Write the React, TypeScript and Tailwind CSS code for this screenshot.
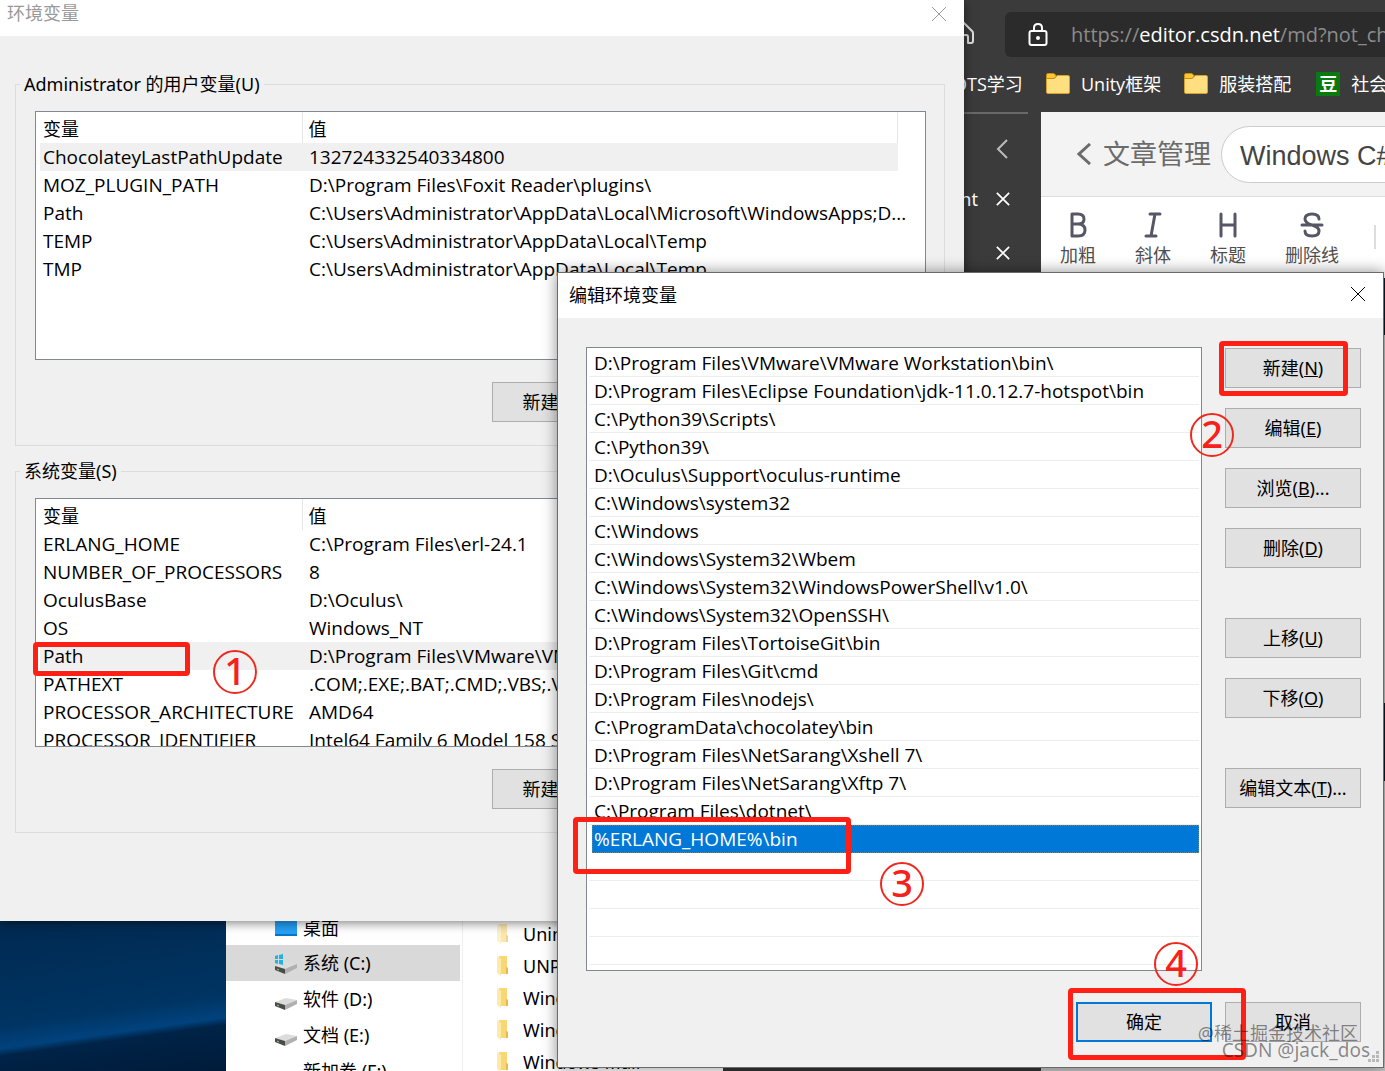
import type { ReactNode } from "react"

type Variable={
    name:string,
    value:string
}

const userVariables:Variable[]=[
  {name:"ChocolateyLastPathUpdate",value:"132724332540334800"},
  {name:"MOZ_PLUGIN_PATH",value:"D:\\Program Files\\Foxit Reader\\plugins\\"},
  {name:"Path",value:"C:\\Users\\Administrator\\AppData\\Local\\Microsoft\\WindowsApps;D..."},
  {name:"TEMP",value:"C:\\Users\\Administrator\\AppData\\Local\\Temp"},
  {name:"TMP",value:"C:\\Users\\Administrator\\AppData\\Local\\Temp"},
]

const systemVariables:Variable[]=[
  {name:"ERLANG_HOME",value:"C:\\Program Files\\erl-24.1"},
  {name:"NUMBER_OF_PROCESSORS",value:"8"},
  {name:"OculusBase",value:"D:\\Oculus\\"},
  {name:"OS",value:"Windows_NT"},
  {name:"Path",value:"D:\\Program Files\\VMware\\VM"},
  {name:"PATHEXT",value:".COM;.EXE;.BAT;.CMD;.VBS;.VBE"},
  {name:"PROCESSOR_ARCHITECTURE",value:"AMD64"},
  {name:"PROCESSOR_IDENTIFIER",value:"Intel64 Family 6 Model 158 S"},
]

const paths=[
  "D:\\Program Files\\VMware\\VMware Workstation\\bin\\",
  "D:\\Program Files\\Eclipse Foundation\\jdk-11.0.12.7-hotspot\\bin",
  "C:\\Python39\\Scripts\\",
  "C:\\Python39\\",
  "D:\\Oculus\\Support\\oculus-runtime",
  "C:\\Windows\\system32",
  "C:\\Windows",
  "C:\\Windows\\System32\\Wbem",
  "C:\\Windows\\System32\\WindowsPowerShell\\v1.0\\",
  "C:\\Windows\\System32\\OpenSSH\\",
  "D:\\Program Files\\TortoiseGit\\bin",
  "D:\\Program Files\\Git\\cmd",
  "D:\\Program Files\\nodejs\\",
  "C:\\ProgramData\\chocolatey\\bin",
  "D:\\Program Files\\NetSarang\\Xshell 7\\",
  "D:\\Program Files\\NetSarang\\Xftp 7\\",
  "C:\\Program Files\\dotnet\\",
]

function CloseIcon({className}:{className:string}) {
  return (
    <svg className={className} viewBox="0 0 16 16" fill="none" stroke="currentColor" aria-hidden="true">
      <path d="M1 1l14 14M15 1L1 15"/>
    </svg>
  )
}

function FolderIcon() {
  return (
    <svg className="h-6 w-6 shrink-0" viewBox="0 0 24 24" aria-hidden="true">
      <path d="M.5 20V6.500H8L11.500 3.500H22q1.500 0 1.500 1.500V20q0 1.500-1.500 1.500H2Q.5 21.500.5 20z" fill="#ffdf80" stroke="#d9a02c"/>
      <path d="M.5 3q0-1.500 1.500-1.500h6L10.500 4 8 6.500H.5z" fill="#f8c935" stroke="#c98f10"/>
    </svg>
  )
}

function ExplorerFolder({faded}:{faded?:boolean}) {
  return (
    <svg className={faded ? "h-5 w-4 shrink-0 opacity-60" : "h-5 w-4 shrink-0"} viewBox="0 0 16 20" aria-hidden="true">
      <path d="M4 0h8v11l1 1v6H4z" fill="#f9d775"/>
      <path d="M2 0l4 3v17l-4-3z" fill="#fde9a9"/>
      <path d="M11 11l2 1v6h-2z" fill="#e6b94e"/>
    </svg>
  )
}

function DriveIcon({system}:{system?:boolean}) {
  return (
    <svg className="h-6 w-6 shrink-0" viewBox="0 0 24 24" aria-hidden="true">
      <path d="M1 15l11-4 11 2-12 5z" fill="#dcdcdc"/>
      <path d="M1 15l10 3v5L1 19z" fill="#4a4a4a"/>
      <path d="M11 18l12-5v4l-12 6z" fill="#b0b0b0"/>
      <path d="M3 18l2 1" stroke="#8fce8f"/>
      {system && <path d="M1 5l3-1v4H1zM5 4l4-1v5H5zM1 9h3v4l-3-1zM5 9h4v5l-4-1z" fill="#1fb2e5"/>}
    </svg>
  )
}

function PushButton({children,primary}:{children:ReactNode,primary?:boolean}) {
  return (
    <button type="button" className={primary
      ? "h-10 w-[136px] shrink-0 border-2 border-[#0078d7] bg-[#e1e1e1] whitespace-nowrap"
      : "h-10 w-[136px] shrink-0 border border-[#adadad] bg-[#e1e1e1] whitespace-nowrap"}>
      {children}
    </button>
  )
}

type GroupProps={
    title:string,
    rows:Variable[],
    selected:number
}
function VariableGroup({title,rows,selected}:GroupProps) {
  return (
    <fieldset className="h-[374px] border border-[#dcdcdc] pr-[18px] pl-[19px]">
      <legend className="-ml-[15px] px-1 leading-6">{title}</legend>
      <div className="mt-[15px] h-[249px] overflow-hidden border border-[#828790] bg-white pl-1">
        <table className="w-[858px] table-fixed border-collapse text-left">
          <thead>
            <tr>
              <th className="h-[31px] w-[262px] border-r border-[#e5e5e5] pt-[2px] pl-[3px] font-normal">变量</th>
              <th className="h-[31px] border-r border-[#e5e5e5] pt-[2px] pl-[6px] font-normal">值</th>
            </tr>
          </thead>
          <tbody className="font-['Open_Sans','Noto_Sans',sans-serif] text-[19px]">
            {rows.map((row,i)=>(
              <tr className={i===selected ? "h-7 bg-[#f0f0f0]" : "h-7"} key={row.name}>
                <td className="pl-[3px] leading-7 whitespace-nowrap">{row.name}</td>
                <td className="pl-[7px] leading-7 whitespace-nowrap">{row.value}</td>
              </tr>
            ))}
          </tbody>
        </table>
      </div>
      <div className="mt-[22px] flex justify-end gap-[13px]">
        <PushButton>新建(N)...</PushButton>
        <PushButton>编辑(I)...</PushButton>
        <PushButton>删除(L)</PushButton>
      </div>
    </fieldset>
  )
}

function VariablesWindow() {
  return (
    <section className="absolute top-0 left-0 h-[921px] w-[964px] bg-[#f0f0f0] shadow-[0_2px_10px_rgba(0,0,0,0.5)]">
      <header className="flex h-9 items-start justify-between bg-white px-[7px] text-[#999]">
        <h1 className="leading-[26px]">环境变量</h1>
        <button type="button" aria-label="关闭" className="mt-[6px] mr-[10px]"><CloseIcon className="h-4 w-4"/></button>
      </header>
      <div className="flex flex-col gap-[13px] pt-9 pr-[19px] pl-[15px]">
        <VariableGroup title="Administrator 的用户变量(U)" rows={userVariables} selected={0}/>
        <VariableGroup title="系统变量(S)" rows={systemVariables} selected={4}/>
      </div>
    </section>
  )
}

function EditWindow() {
  return (
    <section className="absolute top-[272px] left-[557px] flex h-[796px] w-[827px] flex-col border border-[#6b6b6b] bg-[#f0f0f0] shadow-[0_0_14px_rgba(0,0,0,0.45)]">
      <header className="flex h-[45px] shrink-0 items-start justify-between bg-white pt-2 pr-[17px] pl-[11px]">
        <h2>编辑环境变量</h2>
        <button type="button" aria-label="关闭" className="mt-[5px]"><CloseIcon className="h-4 w-4"/></button>
      </header>
      <div className="flex grow gap-[23px] pt-[29px] pr-[22px] pl-7">
        <ul className="h-[624px] grow overflow-hidden border border-[#828790] bg-white px-[2px] pt-[1px] font-['Open_Sans','Noto_Sans',sans-serif] text-[19px]">
          {paths.map((path)=>(
            <li className="h-7 border-b border-[#ededed] pl-[5px] leading-7 whitespace-nowrap" key={path}>{path}</li>
          ))}
          <li className="ml-[3px] h-7 border border-dotted border-[#5b8a9a] bg-[#0078d7] pl-[1px] leading-[26px] text-white">%ERLANG_HOME%\bin</li>
          {[0,1,2,3].map((n)=>(
            <li className="h-7 border-b border-[#ededed]" key={n}></li>
          ))}
        </ul>
        <div className="flex flex-col gap-5 pt-[1px]">
          <PushButton>新建(<u>N</u>)</PushButton>
          <PushButton>编辑(<u>E</u>)</PushButton>
          <PushButton>浏览(<u>B</u>)...</PushButton>
          <PushButton>删除(<u>D</u>)</PushButton>
          <div className="flex flex-col gap-5 py-[30px]">
            <PushButton>上移(<u>U</u>)</PushButton>
            <PushButton>下移(<u>O</u>)</PushButton>
          </div>
          <PushButton>编辑文本(<u>T</u>)...</PushButton>
        </div>
      </div>
      <footer className="flex justify-end gap-[13px] pr-[22px] pb-[25px]">
        <PushButton primary>确定</PushButton>
        <PushButton>取消</PushButton>
      </footer>
      <svg className="absolute right-1 bottom-1 h-3 w-3" viewBox="0 0 12 12" fill="#b8b8b8" aria-hidden="true">
        <path d="M9 0h3v3H9zM9 4h3v3H9zM9 8h3v3H9zM5 4h3v3H5zM5 8h3v3H5zM1 8h3v3H1z"/>
      </svg>
    </section>
  )
}

type ToolProps={
    label:string,
    children:ReactNode
}
function Tool({label,children}:ToolProps) {
  return (
    <button type="button" className="flex shrink-0 flex-col items-center gap-1 text-[#4f4f4f]">
      <svg className="h-7 w-7" viewBox="0 0 28 28" fill="none" stroke="#555666" strokeWidth="3" strokeLinecap="round" strokeLinejoin="round" aria-hidden="true">
        {children}
      </svg>
      <span className="leading-6">{label}</span>
    </button>
  )
}

function Browser() {
  return (
    <section className="absolute top-0 right-0 left-[940px] h-[300px] overflow-hidden bg-[#3b3b3b] text-white">
      <div className="flex h-[57px] items-end">
        <svg className="mb-3 ml-[11px] h-6 w-6 shrink-0" viewBox="0 0 24 24" fill="none" stroke="#ddd" strokeWidth="2" strokeLinejoin="round" aria-hidden="true">
          <path d="M1 11L12 1l9 9q1 1 1 2v8q0 2-2 2h-3v-6q0-2-2-2h-4"/>
        </svg>
        <div className="ml-[30px] flex h-[45px] grow items-center rounded-l-md bg-[#2b2b2b] pl-[23px]">
          <svg className="h-6 w-5 shrink-0" viewBox="0 0 20 24" fill="none" stroke="#fff" strokeWidth="2" aria-hidden="true">
            <path d="M6 8V5q0-4 4-4t4 4v3"/>
            <rect x="1.500" y="8" width="17" height="14" rx="2"/>
            <circle cx="10" cy="15" r="1" fill="#fff"/>
          </svg>
          <div className="ml-[23px] font-['Open_Sans','Noto_Sans',sans-serif] text-[20px] whitespace-nowrap text-[#8c8c8c]">https://<span className="text-white">editor.csdn.net</span>/md?not_check</div>
        </div>
      </div>
      <nav className="flex h-[53px] items-center font-['Open_Sans','Noto_Sans_CJK_SC',sans-serif] whitespace-nowrap">
        <a href="#dots" className="w-20 shrink-0 text-right">DOTS学习</a>
        <a href="#unity" className="ml-[26px] flex items-center gap-[11px]"><FolderIcon/>Unity框架</a>
        <a href="#dress" className="ml-[23px] flex items-center gap-[11px]"><FolderIcon/>服装搭配</a>
        <a href="#social" className="ml-[25px] flex items-center gap-[11px]"><span className="flex h-6 w-6 shrink-0 items-center justify-center bg-[#087a10] font-bold">豆</span>社会</a>
      </nav>
      <div className="mt-0.5 flex h-[188px]">
        <div className="flex w-[101px] shrink-0 flex-col pr-[13px]">
          <div className="h-0.5 shrink-0 bg-[#696969]"></div>
          <svg className="mt-[25px] mr-5 h-5 w-3 self-end" viewBox="0 0 12 20" fill="none" stroke="#bbb" strokeWidth="2" aria-hidden="true">
            <path d="M11 1L2 10l9 9"/>
          </svg>
          <div className="mt-[28px] flex items-center justify-end gap-[18px] pr-[18px] leading-6">
            <span>Agent</span>
            <button type="button" aria-label="关闭标签页"><CloseIcon className="h-[14px] w-[14px] stroke-2"/></button>
          </div>
          <button type="button" aria-label="关闭标签页" className="mt-[35px] mr-[18px] self-end"><CloseIcon className="h-[14px] w-[14px] stroke-2"/></button>
        </div>
        <main className="grow overflow-hidden bg-white">
          <div className="flex h-[85px] items-center border-b border-[#ddd] bg-[#f3f3f3] pl-9">
            <a href="#articles" className="flex shrink-0 items-center gap-3 text-[27px] text-[#6b6b6b]">
              <svg className="h-[22px] w-[14px]" viewBox="0 0 14 22" fill="none" stroke="currentColor" strokeWidth="3" aria-hidden="true">
                <path d="M13 1L2 11l11 10"/>
              </svg>
              文章管理
            </a>
            <input aria-label="文章标题" defaultValue="Windows C#" className="ml-[10px] h-[57px] w-[300px] shrink-0 rounded-full border border-[#ccc] bg-white pt-1 pl-[18px] font-['Liberation_Sans',Arial,sans-serif] text-[27px] text-[#444]"/>
          </div>
          <div className="flex pt-[14px] pl-[19px]">
            <Tool label="加粗"><path d="M8 3v22M8 3h6q6 0 6 5t-6 5H8M14 13q7 0 7 6t-7 6H8"/></Tool>
            <div className="ml-[39px]"><Tool label="斜体"><path d="M11 3h10M7 25h10M16 3l-4 22"/></Tool></div>
            <div className="ml-[39px]"><Tool label="标题"><path d="M7 3v22M21 3v22M7 14h14"/></Tool></div>
            <div className="ml-[39px]"><Tool label="删除线"><path d="M21 8q0-5-7-5t-7 5q0 4 7 6t7 6q0 5-7 5t-7-5M4 14h20"/></Tool></div>
            <div className="mt-[14px] ml-[35px] h-6 w-0.5 bg-[#ddd]"></div>
          </div>
        </main>
      </div>
    </section>
  )
}

function Explorer() {
  return (
    <section className="absolute top-[910px] left-[226px] flex h-[161px] w-[497px] overflow-hidden bg-white">
      <ul className="w-[237px] shrink-0 border-r border-[#eee]">
        <li className="flex h-[35px] items-center gap-[5px] pl-12">
          <svg className="h-6 w-6" viewBox="0 0 24 24" aria-hidden="true">
            <path d="M1 1h22v19H1z" fill="#25a0f5"/>
            <path d="M1 19h22" stroke="#0875c8" strokeWidth="2"/>
          </svg>
          桌面
        </li>
        <li className="mr-[2px] flex h-9 items-center gap-[5px] bg-[#d9d9d9] pl-12"><DriveIcon system/>系统 (C:)</li>
        <li className="flex h-9 items-center gap-[5px] pl-12"><DriveIcon/>软件 (D:)</li>
        <li className="flex h-9 items-center gap-[5px] pl-12"><DriveIcon/>文档 (E:)</li>
        <li className="flex h-9 items-center pl-[77px]">新加卷 (F:)</li>
      </ul>
      <ul className="pt-2 pl-8 whitespace-nowrap">
        <li className="flex h-8 items-center gap-3"><ExplorerFolder faded/>Uninstall</li>
        <li className="flex h-8 items-center gap-3"><ExplorerFolder/>UNP</li>
        <li className="flex h-8 items-center gap-3"><ExplorerFolder/>Windows</li>
        <li className="flex h-8 items-center gap-3"><ExplorerFolder/>Windows</li>
        <li className="flex h-8 items-center gap-3"><ExplorerFolder/>Windows Mail</li>
      </ul>
    </section>
  )
}

// red numbered steps drawn over the windows
function Steps() {
  return (
    <div className="pointer-events-none font-['Noto_Sans','Open_Sans',sans-serif] text-[38px] leading-9 font-medium text-[#f8201a]">
      <div className="absolute top-[642px] left-[33px] h-[34px] w-[157px] rounded-sm border-5 border-[#ff2015]"></div>
      <div className="absolute top-[341px] left-[1219px] h-[55px] w-[129px] rounded-sm border-5 border-[#ff2015]"></div>
      <div className="absolute top-[817px] left-[573px] h-[57px] w-[278px] rounded-sm border-5 border-[#ff2015]"></div>
      <div className="absolute top-[988px] left-[1068px] h-[72px] w-[178px] rounded-sm border-5 border-[#ff2015]"></div>
      <span className="absolute top-[650px] left-[213px] flex h-11 w-11 items-center justify-center rounded-full border-2 border-[#ee2a20] pb-1">1</span>
      <span className="absolute top-[413px] left-[1190px] flex h-11 w-11 items-center justify-center rounded-full border-2 border-[#ee2a20] pb-1">2</span>
      <span className="absolute top-[862px] left-[880px] flex h-11 w-11 items-center justify-center rounded-full border-2 border-[#ee2a20] pb-1">3</span>
      <span className="absolute top-[942px] left-[1154px] flex h-11 w-11 items-center justify-center rounded-full border-2 border-[#ee2a20] pb-1">4</span>
    </div>
  )
}

function App() {
  return (
    <div className="relative h-screen overflow-hidden bg-[#c8c8c8] font-['Noto_Sans','Noto_Sans_CJK_SC',sans-serif] text-lg leading-7 text-black">
      <Browser/>
      <div className="absolute top-[278px] right-0 h-[57px] w-6 bg-[#051a2c]"></div>
      <div className="absolute top-[703px] right-0 h-[78px] w-6 bg-[#051a2c]"></div>
      <div className="absolute bottom-0 left-0 h-[161px] w-[226px] bg-[linear-gradient(172deg,#00284f_0%,#003462_60%,#01427d_72%,#002347_76%,#001b3a_100%)]"></div>
      <div className="absolute right-[344px] bottom-0 h-4 w-[318px] bg-[#333]"></div>
      <Explorer/>
      <VariablesWindow/>
      <EditWindow/>
      <Steps/>
      <div className="absolute right-[27px] bottom-6 leading-7 whitespace-nowrap text-black/45">@稀土掘金技术社区</div>
      <div className="absolute right-[15px] bottom-[7px] text-[19px] leading-7 whitespace-nowrap text-black/45">CSDN @jack_dos</div>
    </div>
  )
}

export default App
